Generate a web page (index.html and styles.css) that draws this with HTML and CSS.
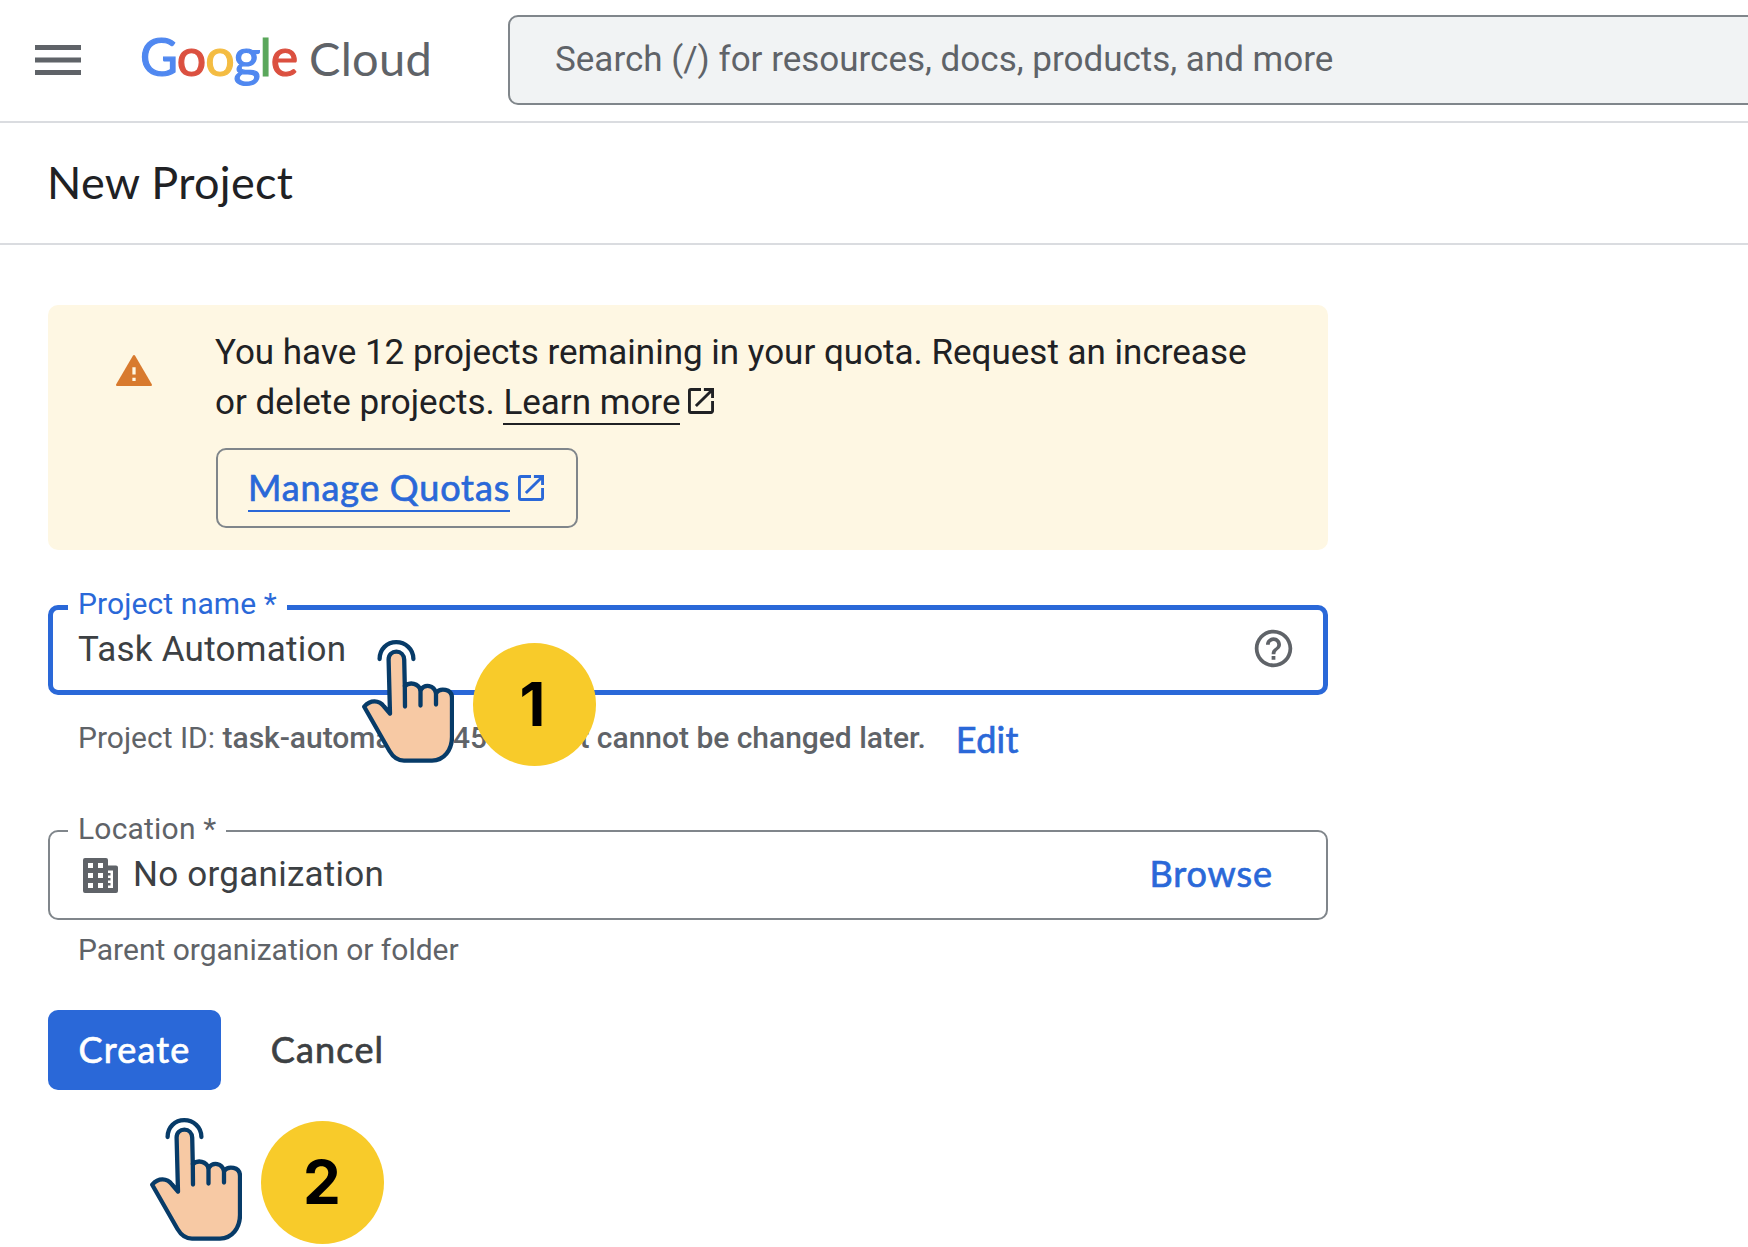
FILE: index.html
```html
<!DOCTYPE html>
<html lang="en">
<head>
    <meta charset="UTF-8">
    <meta name="viewport" content="width=device-width, initial-scale=1.0">
    <title>New Project - Google Cloud</title>
    <link rel="stylesheet" href="styles.css">
</head>
<body>
    <!-- shared icons -->
    <svg class="defs" width="0" height="0">
        <symbol id="open-in-new" viewBox="3 3 18 18">
            <path fill="currentColor" d="M19 19H5V5h7V3H5a2 2 0 0 0-2 2v14a2 2 0 0 0 2 2h14c1.1 0 2-.9 2-2v-7h-2v7zM14 3v2h3.59l-9.83 9.83 1.41 1.41L19 6.41V10h2V3h-7z"/>
        </symbol>
        <symbol id="tap-hand" viewBox="0 0 92 123">
            <g stroke="#073b68" stroke-width="4.3" stroke-linecap="round" stroke-linejoin="round">
                <path fill="none" d="M17.6 19C17.6 9 25 2.2 34.2 2.2S51.4 9 51.4 19"/>
                <path fill="#f7c9a4" d="M26.6 19.5C26.6 14.5 30 11.7 34.4 11.7S42 15 42.2 19.5L42.8 46C48 41.5 56.5 43.5 58.5 50C63 43.5 72 45 74 53C78 47.5 90 48.5 90 58V97C90 110 82 120.600 70 120.600H42C35.500 120.600 31 117 27.500 111L2.200 66.700C8.500 59.500 17 60 22 66.500L28 73.500Z"/>
                <path fill="none" d="M42.8 46L43 66.5M58.5 50V65.5M74 53V64.5"/>
            </g>
        </symbol>
    </svg>

    <header class="topbar">
        <svg class="menu-icon" viewBox="0 0 46 30">
            <path fill="#5f6368" d="M0 0h46v5H0zM0 12.5h46v5H0zM0 25h46v5H0z"/>
        </svg>
        <div class="logo">
            <span class="logo-google"><span class="blue">G</span><span class="red">o</span><span class="yellow">o</span><span class="blue">g</span><span class="green">l</span><span class="red">e</span></span>
            <span class="logo-cloud">Cloud</span>
        </div>
        <div class="search">Search (/) for resources, docs, products, and more</div>
    </header>

    <div class="title-bar">
        <h1>New Project</h1>
    </div>

    <main>
        <section class="quota">
            <svg class="warning-icon" viewBox="1 2 22 19">
                <path fill="#d87a2e" d="M1.7 21h20.6a.7.7 0 0 0 .6-1.05L12.6 2.35a.7.7 0 0 0-1.2 0L1.1 19.95A.7.7 0 0 0 1.7 21z"/>
                <path fill="#fef7e3" d="M11 9.5h2v4.5h-2zM11 16h2v2h-2z"/>
            </svg>
            <div class="quota-body">
                <p>You have 12 projects remaining in your quota. Request an increase<br>or delete projects. <a class="learn-more" href="#">Learn more</a><svg class="link-icon"><use href="#open-in-new"/></svg></p>
                <a class="manage" href="#"><span>Manage Quotas</span><svg class="link-icon"><use href="#open-in-new"/></svg></a>
            </div>
        </section>

        <fieldset class="field focused">
            <legend>Project name *</legend>
            <div class="field-row">
                <span class="value">Task Automation</span>
                <svg class="help-icon" viewBox="0 0 24 24">
                    <path fill="#5f6368" d="M11 18h2v-2h-2v2zm1-16C6.48 2 2 6.48 2 12s4.48 10 10 10 10-4.48 10-10S17.52 2 12 2zm0 18c-4.41 0-8-3.59-8-8s3.59-8 8-8 8 3.59 8 8-3.59 8-8 8zm0-14c-2.21 0-4 1.79-4 4h2c0-1.1.9-2 2-2s2 .9 2 2c0 2-3 1.75-3 5h2c0-2.25 3-2.5 3-5 0-2.21-1.79-4-4-4z"/>
                </svg>
            </div>
        </fieldset>
        <div class="project-id">
            <span>Project ID: <b>task-automation-454213. It cannot be changed later.</b></span>
            <a class="edit" href="#">Edit</a>
        </div>

        <fieldset class="field">
            <legend>Location *</legend>
            <div class="field-row">
                <svg class="org-icon" viewBox="0 0 35 35">
                    <path fill="#5f6368" fill-rule="evenodd" d="M2 0H23a2 2 0 0 1 2 2V7.5H33a2 2 0 0 1 2 2V33a2 2 0 0 1-2 2H2a2 2 0 0 1-2-2V2a2 2 0 0 1 2-2zM5 5v5h5V5zM15 5v5h5V5zM5 15v5h5v-5zM15 15v5h5v-5zM5 25v5h5v-5zM15 25v5h5v-5zM25 12.5V15h2.5v2.5H25V20h2.5v2.5H25V25h2.5v2.5H25V30h5V12.5z"/>
                </svg>
                <span class="value">No organization</span>
                <a class="browse" href="#">Browse</a>
            </div>
        </fieldset>
        <div class="hint">Parent organization or folder</div>

        <div class="actions">
            <button class="create">Create</button>
            <button class="cancel">Cancel</button>
        </div>

        <svg class="hand hand-1"><use href="#tap-hand"/></svg>
        <div class="step step-1">1</div>
        <svg class="hand hand-2"><use href="#tap-hand"/></svg>
        <div class="step step-2">2</div>
    </main>
</body>
</html>
```
FILE: styles.css
```css
* {
    box-sizing: border-box;
}

body {
    margin: 0;
    height: 1247px;
    overflow: hidden;
    background: #fff;
    color: #202124;
    font-family: Roboto, sans-serif;
    font-size: 35px;
}

a {
    color: #2a68d8;
    text-decoration: none;
}

.defs {
    position: absolute;
}

.topbar {
    display: flex;
    align-items: center;
    height: 123px;
    padding: 0 0 2px 35px;
    border-bottom: 2px solid #dadce0;
    overflow: hidden;
}

.menu-icon {
    width: 46px;
    height: 30px;
    flex: none;
}

.logo {
    display: flex;
    align-items: baseline;
    flex: none;
    width: 368px;
    margin: -5px 0 0 59px;
    font-family: Lato, sans-serif;
    line-height: 60px;
    white-space: nowrap;
}

.logo-google {
    width: 169px;
    font-size: 52px;
    letter-spacing: -1px;
    -webkit-text-stroke: 1.2px;
}

.logo-cloud {
    font-size: 47px;
    color: #5f6368;
    letter-spacing: 0.3px;
}

.blue { color: #5088f0; }
.red { color: #db5040; }
.yellow { color: #f4bc42; }
.green { color: #5aa75b; }

.search {
    flex: none;
    width: 1300px;
    height: 90px;
    padding-left: 45px;
    border: 2px solid #80868b;
    border-radius: 10px;
    background: #f1f3f4;
    color: #5f6368;
    line-height: 85px;
}

.title-bar {
    height: 122px;
    padding-left: 47px;
    border-bottom: 2px solid #dadce0;
}

h1 {
    margin: 0;
    font-family: Lato, sans-serif;
    font-size: 45px;
    font-weight: 400;
    letter-spacing: 0.3px;
    line-height: 118px;
}

main {
    position: relative;
    width: 1328px;
    padding: 60px 0 0 48px;
}

.quota {
    display: flex;
    height: 245px;
    padding: 23px 0 0 68px;
    border-radius: 10px;
    background: #fef7e3;
}

.warning-icon {
    width: 36px;
    height: 31px;
    margin: 27px 63px 0 0;
}

.quota p {
    margin: 0 0 20px;
    line-height: 50px;
    white-space: nowrap;
}

.learn-more {
    display: inline-block;
    height: 47px;
    color: #202124;
    border-bottom: 2px solid #202124;
}

.link-icon {
    width: 26px;
    height: 26px;
    margin-left: 8px;
}

.manage,
.edit,
.browse,
.actions button {
    font-family: Lato, sans-serif;
    font-size: 36px;
    letter-spacing: 0.9px;
    -webkit-text-stroke: 0.7px;
}

.manage {
    display: inline-flex;
    align-items: center;
    width: 362px;
    height: 80px;
    margin-left: 1px;
    padding-left: 30px;
    border: 2px solid #80868b;
    border-radius: 10px;
}

.manage span {
    line-height: 46px;
    border-bottom: 2px solid #2a68d8;
}

.field {
    height: 106px;
    margin: 0;
    padding: 0 18px;
    border: 2px solid #80868b;
    border-radius: 10px;
}

.field legend {
    height: 34px;
    padding: 0 10px;
    color: #5f6368;
    font-size: 30px;
    line-height: 30px;
    letter-spacing: 0.2px;
}

.field-row {
    display: flex;
    align-items: center;
    height: 52px;
    padding: 0 35px 0 15px;
}

.value {
    color: #3c4043;
    letter-spacing: 0.25px;
}

.focused {
    margin-top: 39px;
    padding: 0 15px;
    border: 5px solid #2a68d8;
}

.focused legend {
    height: 37px;
    color: #2a68d8;
    letter-spacing: 0.1px;
}

.focused .field-row {
    height: 45px;
    padding: 0 12px 0 10px;
}

.focused .value {
    margin-top: 1px;
}

.help-icon {
    width: 45px;
    height: 45px;
    margin-left: auto;
}

.org-icon {
    width: 35px;
    height: 35px;
    margin: 2px 15px 0 0;
}

.browse {
    margin: -3px 0 0 auto;
}

.project-id {
    display: flex;
    height: 119px;
    padding: 15px 0 0 30px;
    color: #5f6368;
    font-size: 30px;
    line-height: 56px;
    white-space: nowrap;
}

.project-id b {
    font-weight: 500;
    letter-spacing: -0.02px;
}

.edit {
    margin: 1px 0 0 30px;
    letter-spacing: 0.3px;
}

.hint {
    height: 90px;
    padding: 10px 0 0 30px;
    color: #5f6368;
    font-size: 30px;
    line-height: 40px;
}

.actions {
    display: flex;
    gap: 20px;
}

.actions button {
    width: 173px;
    height: 80px;
    padding: 0 0 3px;
    border: 0;
    border-radius: 10px;
    background: none;
    color: #3c4043;
    letter-spacing: 1.2px;
}

.actions .create {
    background: #2a68d8;
    color: #fff;
}

/* click markers drawn on top of the form */
.hand {
    position: absolute;
    width: 92px;
    height: 123px;
}

.hand-1 {
    left: 362px;
    top: 395px;
}

.hand-2 {
    left: 150px;
    top: 873px;
}

.step {
    position: absolute;
    width: 123px;
    height: 123px;
    border-radius: 50%;
    background: #f8cb2a;
    color: #000;
    font-family: Inter, sans-serif;
    font-size: 60px;
    font-weight: 700;
    line-height: 123px;
    text-align: center;
}

.step-1 {
    left: 473px;
    top: 398px;
    padding-right: 4px;
}

.step-2 {
    left: 261px;
    top: 876px;
    padding-right: 1px;
}
```
